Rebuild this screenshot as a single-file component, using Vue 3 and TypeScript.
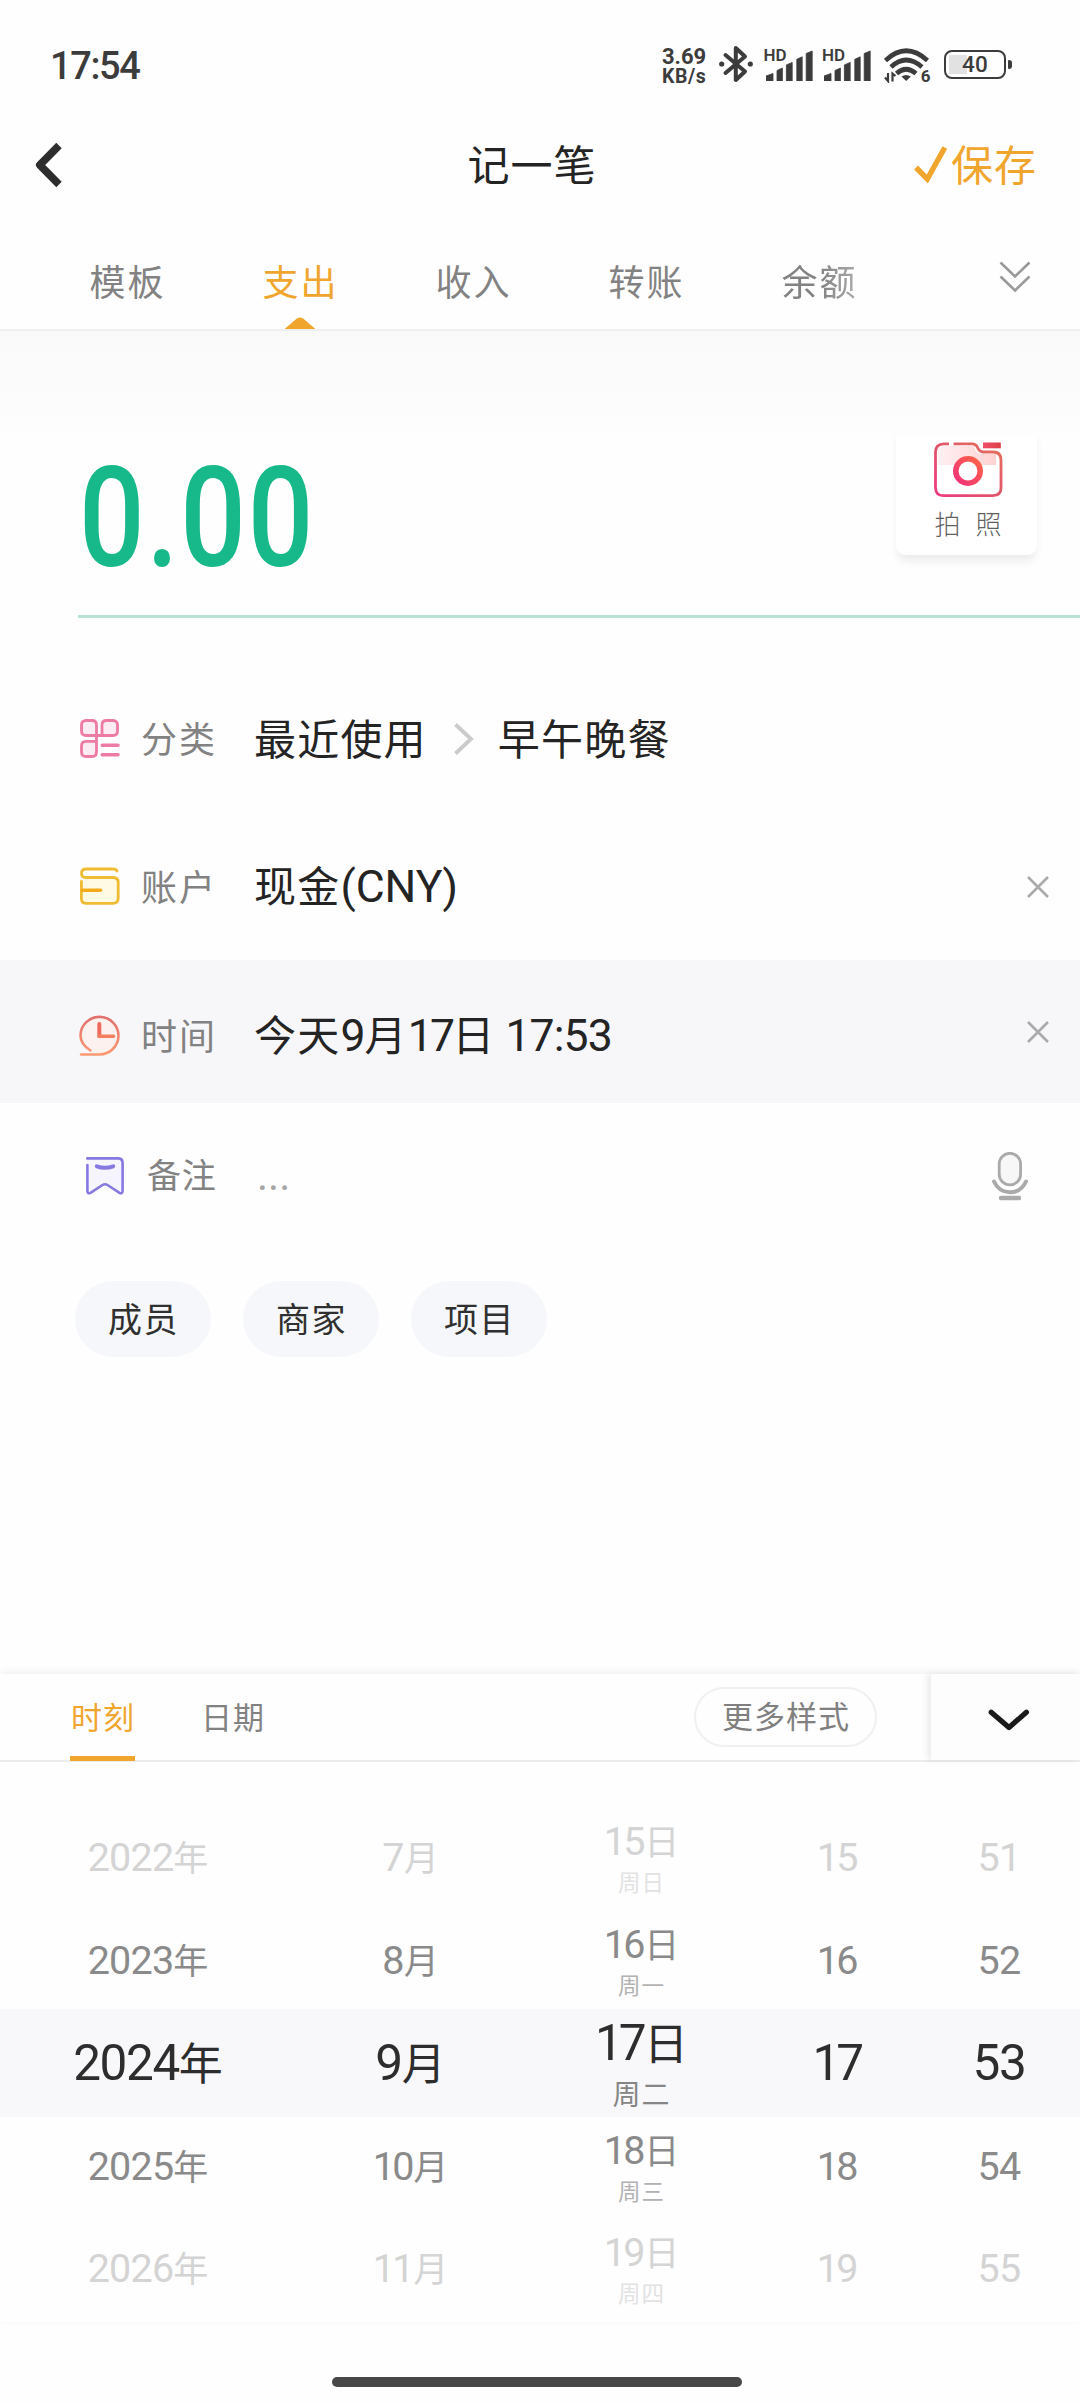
<script setup lang="ts">
import { ref } from 'vue'

interface Seg {
  text: string
  latin: boolean
  tight: boolean
}

/** Splits a label into runs of Han characters and runs of digits / Latin letters. */
function segments(value: string): Seg[] {
  const parts = value.match(/[\u4e00-\u9fff]+|[^\u4e00-\u9fff]+/g) ?? []
  return parts.map((text) => ({
    text,
    latin: !/[\u4e00-\u9fff]/.test(text),
    tight: text.startsWith('1'),
  }))
}

const tabs = ['模板', '支出', '收入', '转账', '余额']
const activeTab = ref(1)

const chips = ['成员', '商家', '项目']

const years = ['2022年', '2023年', '2024年', '2025年', '2026年']
const months = ['7月', '8月', '9月', '10月', '11月']
const days = [
  { day: '15日', week: '周日' },
  { day: '16日', week: '周一' },
  { day: '17日', week: '周二' },
  { day: '18日', week: '周三' },
  { day: '19日', week: '周四' },
]
const hours = ['15', '16', '17', '18', '19']
const minutes = ['51', '52', '53', '54', '55']

const wheel = years.map((year, i) => ({
  year,
  month: months[i],
  day: days[i].day,
  week: days[i].week,
  hour: hours[i],
  minute: minutes[i],
  level: ['far', 'near', 'picked', 'near', 'far'][i],
}))

const bars = [
  { x: 0, w: 7, h: 7.5 },
  { x: 11, w: 5.4, h: 13 },
  { x: 20.4, w: 5.8, h: 18.6 },
  { x: 30.8, w: 5.4, h: 24.2 },
  { x: 40.2, w: 6, h: 30 },
]
</script>

<template>
  <div class="screen">
    <header class="status">
      <span class="clock">17:54</span>
      <div class="status-icons">
        <div class="speed"><span class="rate">3.69</span><span class="unit">KB/s</span></div>
        <svg class="bt" width="34" height="38" viewBox="0 0 34 38" fill="none" stroke="#3c3c3c" stroke-width="4" stroke-linejoin="round" stroke-linecap="round">
          <path d="M6.5 10 L26 26.5 L16.8 35 V3 L26 11.5 L6.5 28" />
          <circle cx="2.7" cy="19" r="2.6" fill="#3c3c3c" stroke="none" />
          <circle cx="31.3" cy="19" r="2.6" fill="#3c3c3c" stroke="none" />
        </svg>
        <div v-for="n in 2" :key="n" class="signal">
          <span class="hd">HD</span>
          <svg width="47" height="31" viewBox="0 0 47 31" fill="#3c3c3c">
            <path v-for="b in bars" :key="b.x" :d="`M${b.x} 31 V${33.5 - b.h} L${b.x + b.w} ${31 - b.h} V31 Z`" stroke="#3c3c3c" stroke-width="0.8" stroke-linejoin="round" />
          </svg>
        </div>
        <div class="wifi">
          <svg width="45" height="35" viewBox="0 0 45 35" fill="none" stroke="#3c3c3c" stroke-width="4.6">
            <path d="M1.5 12.5 Q22 -7 43.5 12.5" />
            <path d="M7 19 Q22 5 38 19" />
            <path d="M12.5 25.5 Q22 17 32 25.5" />
            <path d="M17.5 28.5 Q22 25.5 26.8 28.5 L22.2 33 Z" fill="#3c3c3c" stroke="none" />
            <path d="M4 25 V33 L1 29.5 M8.5 33.5 V25.5 L11.5 28" stroke-width="2.2" />
          </svg>
          <span class="gen">6</span>
        </div>
        <div class="battery"><span class="level">40</span></div>
        <i class="nub"></i>
      </div>
    </header>

    <nav class="titlebar">
      <svg class="back" width="28" height="46" viewBox="0 0 28 46" fill="none" stroke="#2d2d2d" stroke-width="7.6" stroke-linejoin="round">
        <path d="M24 3.5 L4.8 23 L24 42.5" />
      </svg>
      <h1>记一笔</h1>
      <div class="save">
        <svg width="34" height="38" viewBox="0 0 34 38" fill="none" stroke="#f0a62e" stroke-width="5.4">
          <path d="M2 21.5 L13.3 33 L30.8 1.5" />
        </svg>
        <span>保存</span>
      </div>
    </nav>

    <div class="tabs">
      <div v-for="(t, i) in tabs" :key="t" class="tab" :class="{ on: i === activeTab, last: i === 4 }">
        <span>{{ t }}</span>
        <svg v-if="i === activeTab" class="mark" width="32" height="12" viewBox="0 0 32 12"><path d="M0.5 12 L12.5 1.8 Q16 -0.8 19.5 1.8 L31.5 12 Z" fill="#f0a62e" /></svg>
      </div>
      <svg class="more" width="32" height="32" viewBox="0 0 32 32" fill="none" stroke="#999" stroke-width="2.6">
        <path d="M1.5 1.5 L16 15.5 L30.5 1.5 M1.5 15.5 L16 29.5 L30.5 15.5" />
      </svg>
    </div>

    <section class="amount">
      <div class="sum"><span>0.00</span></div>
      <div class="photo">
        <svg width="69" height="56" viewBox="0 0 69 56" fill="none">
          <defs>
            <linearGradient id="cam" x1="0" y1="1" x2="1" y2="0">
              <stop offset="0" stop-color="#ee3a80" />
              <stop offset="0.5" stop-color="#e0566a" />
              <stop offset="1" stop-color="#e8705a" />
            </linearGradient>
            <linearGradient id="lens" x1="0" y1="1" x2="1" y2="0">
              <stop offset="0" stop-color="#f0307a" />
              <stop offset="1" stop-color="#ff6548" />
            </linearGradient>
            <linearGradient id="tint" x1="0" y1="0" x2="1" y2="0">
              <stop offset="0" stop-color="#fff0f3" />
              <stop offset="1" stop-color="#ffd2d2" />
            </linearGradient>
            <linearGradient id="flash" x1="0" y1="0" x2="1" y2="0">
              <stop offset="0" stop-color="#f0506a" />
              <stop offset="1" stop-color="#dc3f45" />
            </linearGradient>
          </defs>
          <path d="M4 23 V10 Q4 4 10 4 H40 Q42 12 48 12 H62 V23 Z" fill="url(#tint)" />
          <path d="M15 1.8 H10 Q1.5 2 1.5 10 V46 Q2 53.6 9 53.6 H59 Q67 53.4 67 46 V18 Q67 10 59 10 H49 Q45 9.5 43.6 5.5 Q42 1.8 38.5 1.8 H19.5" stroke="url(#cam)" stroke-width="2.8" />
          <rect x="49" y="0.5" width="17.8" height="5.8" fill="url(#flash)" />
          <circle cx="34" cy="29" r="12.2" fill="#fff" stroke="url(#lens)" stroke-width="5.6" />
        </svg>
        <div class="photo-label"><span>拍</span><span>照</span></div>
      </div>
    </section>
    <div class="rule"></div>

    <section class="row category">
      <svg class="ico" width="40" height="40" viewBox="0 0 40 40" fill="#fdecf3" stroke="#ee7ba5" stroke-width="2.8" stroke-linecap="round" stroke-linejoin="round">
        <path d="M16.5 16.5 H6 Q1.5 16.5 1.5 12 V6 Q1.5 1.5 6 1.5 H12 Q16.5 1.5 16.5 6 Z" />
        <path d="M16.5 16.5 H33 Q37.5 16.5 37.5 12 V6 Q37.5 1.5 33 1.5 H26.5 Q22 1.5 22 6 V16.5" />
        <path d="M16.5 16.5 V33 Q16.5 37.5 12 37.5 H6 Q1.5 37.5 1.5 33 V27 Q1.5 22.3 6 22.3 H16.5" />
        <path d="M22.3 26.3 H38 M22.3 35.8 H38" stroke-width="3.6" />
      </svg>
      <span class="label">分类</span>
      <span class="value">最近使用</span>
      <svg class="arrow" width="20" height="32" viewBox="0 0 20 32" fill="none" stroke="#cbcbcb" stroke-width="3.8"><path d="M1.5 1.5 L17 16 L1.5 30.5" /></svg>
      <span class="value">早午晚餐</span>
    </section>

    <section class="row account">
      <svg class="ico" width="40" height="40" viewBox="0 0 40 40" fill="none" stroke-linecap="round">
        <path d="M2 12 H33 Q38 12 38 15 V31 Q38 36 33 36 H6 Q2 36 2 32 Z" fill="#fffae3" />
        <path d="M37 4 Q36 2 33 2 H6 Q1.5 2 1.5 6.2 T6 10.5 H33 Q38.2 10.5 38.2 15.5 V31 Q38.2 36.3 33 36.3 H6 Q1.4 36.3 1.4 31.5 V14.5" stroke="#efbb33" stroke-width="2.8" />
        <path d="M2.5 23.3 H20.5" stroke="#f3ab1c" stroke-width="3.6" />
      </svg>
      <span class="label">账户</span>
      <span class="value"><span v-for="s in segments('现金(CNY)')" :key="s.text" :class="{ lat: s.latin }">{{ s.text }}</span></span>
      <svg class="close" width="22" height="22" viewBox="0 0 22 22" fill="none" stroke="#aaa" stroke-width="2.6"><path d="M1 1 L21 21 M21 1 L1 21" /></svg>
    </section>

    <section class="row time">
      <svg class="ico" width="42" height="42" viewBox="0 0 42 42" fill="none" stroke-linecap="round" stroke-linejoin="round">
        <defs>
          <linearGradient id="clk" x1="0" y1="0" x2="0" y2="1">
            <stop offset="0" stop-color="#e2706c" />
            <stop offset="1" stop-color="#fb9a72" />
          </linearGradient>
        </defs>
        <path d="M11.5 35.5 Q1.5 29.5 1.5 20.3 A19 18.8 0 1 1 20.5 39.5 L11.5 35.5 Z" fill="#fdf1f0" />
        <path d="M11.5 35.5 Q1.5 29.5 1.5 20.3 A19 18.8 0 1 1 20.5 39.5 H2" stroke="url(#clk)" stroke-width="2.6" />
        <path d="M20.3 9 V21.2" stroke="#ee6a5c" stroke-width="4" />
        <path d="M20.3 21.2 H34.5" stroke="#f5805f" stroke-width="3.6" />
      </svg>
      <span class="label">时间</span>
      <span class="value"><span v-for="(s, i) in segments('今天9月17日 17:53')" :key="i" :class="{ lat: s.latin, tight: s.tight }">{{ s.text }}</span></span>
      <svg class="close" width="22" height="22" viewBox="0 0 22 22" fill="none" stroke="#aaa" stroke-width="2.6"><path d="M1 1 L21 21 M21 1 L1 21" /></svg>
    </section>

    <section class="row note">
      <svg class="ico" width="38" height="38" viewBox="0 0 38 38" fill="none" stroke="#8679e0" stroke-linejoin="round" stroke-linecap="round">
        <path d="M1.3 1.4 H32.5 Q36.6 1.6 36.6 6 V34 Q36.3 37.2 33.5 35.8 L21.5 28 Q19 26.5 16.5 28 L4.5 35.8 Q1.6 37.2 1.4 34 V8" fill="#f6f4ff" stroke-width="2.6" />
        <path d="M10.8 9.3 Q19 12.3 27.2 9.3" stroke-width="4" />
      </svg>
      <span class="label">备注</span>
      <span class="dots">...</span>
      <svg class="mic" width="36" height="49" viewBox="0 0 36 49" fill="none" stroke="#aaaaaa" stroke-linecap="round">
        <rect x="7.2" y="1.3" width="21.4" height="31.6" rx="10.7" fill="#f7f7f7" stroke-width="2.8" />
        <path d="M2 29.5 Q7 40.3 18 40.3 T34 29.5" stroke-width="4" />
        <path d="M9 46 H27" stroke-width="4.4" />
      </svg>
    </section>

    <section class="chips">
      <span v-for="c in chips" :key="c" class="chip">{{ c }}</span>
    </section>

    <section class="panel">
      <div class="panel-bar">
        <div class="ptab on">时刻</div>
        <div class="ptab">日期</div>
        <div class="style-pill">更多样式</div>
        <div class="collapse">
          <svg width="42" height="24" viewBox="0 0 42 24" fill="none" stroke="#1a1a1a" stroke-width="5.2" stroke-linecap="round" stroke-linejoin="round"><path d="M3.2 3.2 L21 18.5 L38.4 3.2" /></svg>
        </div>
      </div>
      <div class="wheel">
        <div v-for="r in wheel" :key="r.year" class="wrow" :class="r.level">
          <div class="c-year"><span v-for="s in segments(r.year)" :key="s.text" :class="{ num: s.latin }">{{ s.text }}</span></div>
          <div class="c-month"><span v-for="s in segments(r.month)" :key="s.text" :class="{ num: s.latin, tight: s.tight }">{{ s.text }}</span></div>
          <div class="c-day">
            <div class="day"><span v-for="s in segments(r.day)" :key="s.text" :class="{ num: s.latin, tight: s.tight }">{{ s.text }}</span></div>
            <div class="week">{{ r.week }}</div>
          </div>
          <div class="c-hour"><span class="num tight">{{ r.hour }}</span></div>
          <div class="c-minute"><span class="num">{{ r.minute }}</span></div>
        </div>
      </div>
    </section>

    <footer class="home"><i></i></footer>
  </div>
</template>

<style>
body {
  background: #fefefe;
}
</style>

<style scoped>
* {
  box-sizing: border-box;
}
.screen {
  width: 1080px;
  height: 2403px;
  display: flex;
  flex-direction: column;
  overflow: hidden;
  background: #fefefe;
  color: #242424;
  font-family: 'Noto Sans CJK SC', sans-serif;
  line-height: 1;
  white-space: nowrap;
}
svg {
  display: block;
  flex: none;
}
i {
  display: block;
}

/* status bar */
.status {
  height: 103px;
  flex: none;
  display: flex;
  justify-content: space-between;
  padding: 0 68px 0 50px;
  font-family: Roboto, sans-serif;
  color: #3c3c3c;
}
.clock {
  margin-top: 47px;
  font-size: 38px;
  font-weight: 500;
  letter-spacing: -1.4px;
}
.status-icons {
  display: flex;
  align-items: flex-start;
}
.speed {
  width: 57px;
  padding-top: 45px;
  display: flex;
  flex-direction: column;
  font-weight: 700;
}
.rate {
  font-size: 22px;
  line-height: 24px;
}
.unit {
  font-size: 19.5px;
  letter-spacing: 0.6px;
  line-height: 16px;
}
.bt {
  margin-top: 45px;
}
.signal {
  position: relative;
  width: 47px;
  padding-top: 50px;
  margin-left: 13px;
}
.signal + .signal {
  margin-left: 11.5px;
}
.hd {
  position: absolute;
  left: -2.5px;
  top: 47px;
  font-size: 17px;
  font-weight: 600;
  line-height: 16px;
}
.wifi {
  position: relative;
  margin: 48px 0 0 13px;
}
.gen {
  position: absolute;
  right: -1px;
  top: 20px;
  font-size: 17px;
  font-weight: 700;
  line-height: 17px;
}
.battery {
  width: 62px;
  height: 29px;
  margin: 50px 2.5px 0 14.5px;
  border: 2.6px solid #3c3c3c;
  border-radius: 8px;
  padding: 2px 3px;
  display: flex;
  justify-content: center;
  align-items: center;
  background: linear-gradient(#e2e2e2, #e2e2e2) 3px 3px / 18px 19px no-repeat;
}
.level {
  font-size: 22.5px;
  font-weight: 500;
}
.nub {
  width: 3.6px;
  height: 9px;
  margin-top: 60px;
  border-radius: 1px 3px 3px 1px;
  background: #3c3c3c;
}

/* title bar */
.titlebar {
  height: 124px;
  flex: none;
  display: grid;
  grid-template-columns: 1fr auto 1fr;
  align-items: center;
  padding: 0 43px 0 35px;
}
h1 {
  margin: 0 0 5px -8px;
  font-size: 42px;
  font-weight: 400;
  letter-spacing: 1px;
}
.save {
  justify-self: end;
  display: flex;
  align-items: center;
  gap: 3px;
  color: #f0a62e;
  font-size: 42px;
  letter-spacing: 1px;
}
.save span {
  margin-bottom: 5px;
}

/* tab strip */
.tabs {
  height: 104px;
  flex: none;
  display: flex;
  padding-left: 40px;
  border-bottom: 2px solid #efefef;
}
.tab {
  width: 173px;
  display: flex;
  flex-direction: column;
  align-items: center;
  justify-content: space-between;
  padding-top: 35px;
  font-size: 36px;
  letter-spacing: 2px;
  text-indent: 2px;
  color: #828282;
}
.tab.on {
  color: #f0a62e;
}
.tab.last {
  mask-image: linear-gradient(90deg, #000 50%, rgba(0, 0, 0, 0.65) 74%);
}
.more {
  margin: 34px 0 0 94px;
}

/* amount */
.amount {
  height: 284px;
  flex: none;
  display: flex;
  justify-content: space-between;
  align-items: flex-end;
  padding: 0 43px 60px 79px;
  background: linear-gradient(#f9f9f9, #fefefe 110px);
}
.sum {
  width: 260px;
  height: 140px;
  margin-bottom: -33px;
  font-family: Roboto, sans-serif;
  font-size: 140px;
  font-weight: 500;
  line-height: 140px;
  color: #17b98a;
}
.sum span {
  display: inline-block;
  transform: scaleX(0.825);
  transform-origin: left;
  letter-spacing: 2.2px;
}
.photo {
  width: 141px;
  height: 130px;
  display: flex;
  flex-direction: column;
  align-items: center;
  padding: 17px 0 0 3px;
  border-radius: 10px;
  background: linear-gradient(rgba(255, 255, 255, 0.2), #fff 30px);
  box-shadow: 0 8px 10px -2px rgba(0, 0, 0, 0.08);
}
.photo-label {
  width: 67px;
  margin-top: 12px;
  display: flex;
  justify-content: space-between;
  font-size: 26px;
  font-weight: 300;
  color: #5f5f5f;
}
.rule {
  height: 3px;
  flex: none;
  margin-left: 78px;
  background: #b8e3d4;
}

/* form rows */
.row {
  flex: none;
  display: flex;
  align-items: center;
  padding: 0 31px 0 80px;
}
.category {
  height: 149px;
  margin-top: 46px;
}
.account {
  height: 147px;
}
.time {
  height: 143px;
  padding-left: 79px;
  padding-top: 8px;
  background: #f7f7fa;
}
.note {
  height: 146px;
  padding-left: 86px;
}
.label {
  width: 113px;
  margin-left: 21px;
  padding-bottom: 4px;
  font-size: 36px;
  letter-spacing: 2px;
  color: #828282;
}
.time .label {
  margin-left: 20px;
}
.note .label {
  width: 110px;
  margin-left: 23px;
  font-size: 34px;
  letter-spacing: 0.7px;
}
.value {
  padding-bottom: 4px;
  font-size: 42px;
  letter-spacing: 1.2px;
}
.account .value,
.time .value {
  padding-bottom: 1px;
}
.lat {
  font-family: Roboto, sans-serif;
  font-size: 44.5px;
  letter-spacing: 0;
}
.time .lat {
  letter-spacing: -0.9px;
}
.time .lat.tight {
  letter-spacing: -2.8px;
}
.arrow {
  margin: 0 24px 0 27px;
}
.close {
  margin-left: auto;
}
.time .close {
  margin-top: -7px;
}
.dots {
  font-family: Roboto, sans-serif;
  font-size: 42px;
  color: #a5a5a5;
}
.mic {
  margin: 0 21px 0 auto;
}

/* chips */
.chips {
  height: 425px;
  flex: none;
  display: flex;
  gap: 32px;
  padding: 32px 0 0 75px;
}
.chip {
  width: 136px;
  height: 76px;
  border-radius: 38px;
  background: #f5f7fa;
  font-size: 34px;
  letter-spacing: 1.5px;
  text-indent: 1px;
  line-height: 73px;
  text-align: center;
  color: #303030;
}

/* picker panel */
.panel {
  flex: none;
  background: #fefefe;
  box-shadow: 0 -2px 8px rgba(0, 0, 0, 0.06);
}
.panel-bar {
  height: 88px;
  display: flex;
  padding-left: 70px;
  border-bottom: 2px solid #ececec;
}
.ptab {
  height: 87px;
  width: 65px;
  margin-right: 65px;
  line-height: 83px;
  font-size: 31px;
  letter-spacing: 1px;
  text-indent: 1px;
  color: #828282;
}
.ptab.on {
  color: #f0a62e;
  border-bottom: 5px solid #f0a62e;
}
.style-pill {
  width: 183px;
  height: 60px;
  margin: 13px 0 0 364px;
  border: 2px solid #f0f0f0;
  border-radius: 30px;
  text-align: center;
  font-size: 31px;
  letter-spacing: 1px;
  text-indent: 1px;
  line-height: 51px;
  color: #808080;
}
.collapse {
  width: 149px;
  height: 86px;
  margin-left: auto;
  padding: 35px 0 0 57px;
  background: #fdfdfd;
  box-shadow: -4px 0 6px rgba(0, 0, 0, 0.07);
}

/* wheel */
.wheel {
  padding-top: 42px;
  display: flex;
  flex-direction: column;
}
.wrow {
  display: flex;
  align-items: center;
  padding-left: 48px;
  font-size: 35px;
}
.wrow > div {
  flex: none;
  text-align: center;
  padding-top: 1px;
}
.num {
  font-family: Roboto, sans-serif;
  font-size: 39.5px;
  letter-spacing: -0.8px;
}
.num.tight {
  letter-spacing: -2.6px;
  margin-right: 1.5px;
}
.c-year {
  width: 200px;
}
.c-month {
  width: 325px;
}
.c-day {
  width: 137px;
}
.c-hour {
  width: 254px;
}
.c-minute {
  width: 70px;
}
.day {
  line-height: 42px;
}
.week {
  margin-top: 2px;
  font-size: 22.5px;
  letter-spacing: 1px;
  line-height: 32px;
}
.far {
  height: 107px;
  color: #d4d4d4;
}
.near {
  height: 98px;
  color: #8a8a8a;
}
.picked {
  height: 108px;
  font-size: 44px;
  background: #f8f8fa;
  color: #2d2d2d;
}
.picked .num {
  font-size: 49.5px;
  letter-spacing: -1.4px;
}
.picked .num.tight {
  letter-spacing: -4px;
}
.picked .day {
  line-height: 52px;
}
.picked .week {
  margin-top: 7px;
  font-size: 28px;
  line-height: 34px;
  color: #858585;
}
.wrow.picked .c-day {
  padding-bottom: 2px;
}
.far .week {
  color: #e2e2e2;
}
.near .week {
  color: #b2b2b2;
}

/* home indicator */
.home {
  margin-top: auto;
  padding-bottom: 16px;
}
.home i {
  width: 410px;
  height: 10px;
  margin: 0 auto;
  transform: translateX(-3px);
  border-radius: 5px;
  background: #484848;
}
</style>
